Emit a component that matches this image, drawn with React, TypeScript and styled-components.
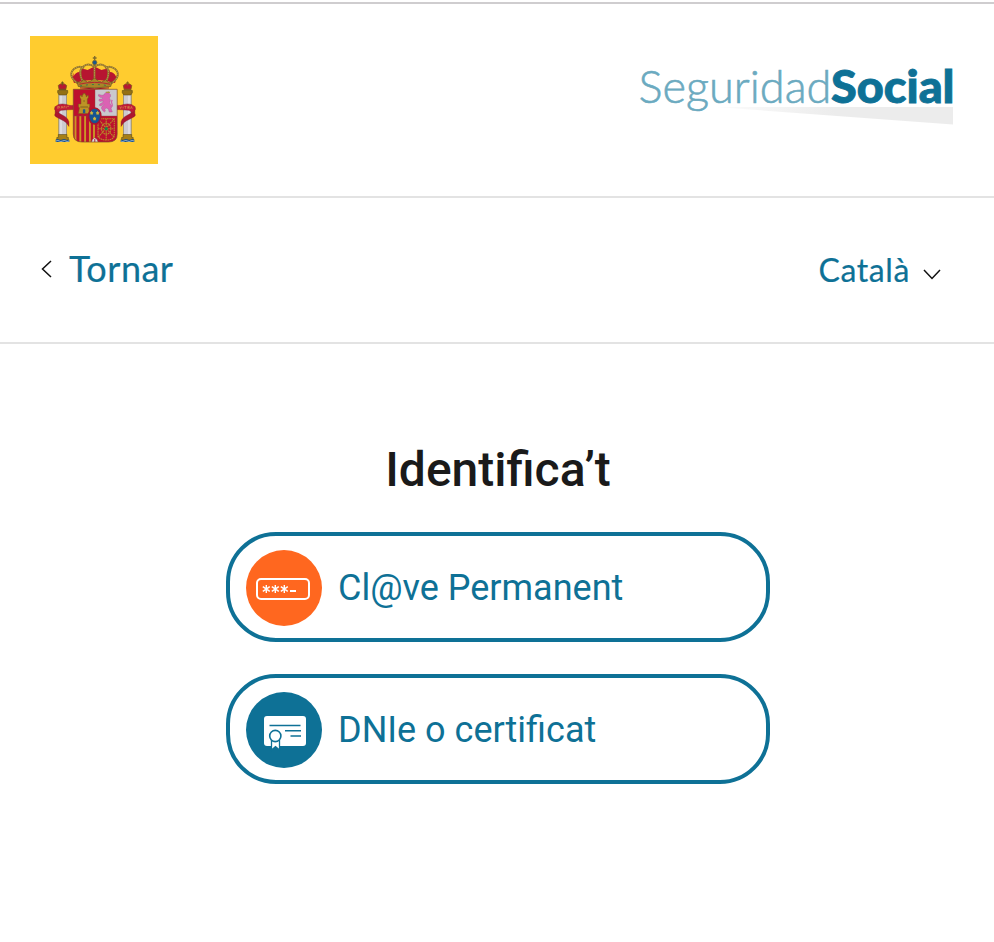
import React from 'react';
import styled, { createGlobalStyle } from 'styled-components';

const blue = '#0e7196';

const GlobalStyle = createGlobalStyle`
  * {
    box-sizing: border-box;
  }

  body {
    margin: 0;
    background: #fff;
    font-family: Roboto, sans-serif;
  }
`;

const Page = styled.div`
  min-height: 942px;
  padding-top: 2px;
`;

const Header = styled.header`
  display: flex;
  justify-content: space-between;
  align-items: flex-start;
  height: 196px;
  padding: 32px 30px 0;
  border-top: 2px solid #cfcdcf;
  border-bottom: 2px solid #e3e3e3;
`;

const Emblem = styled.svg`
  width: 128px;
  height: 128px;
  background: #ffcc2f;
`;

const Logo = styled.svg`
  width: 330px;
  height: 80px;
  margin-top: 14px;
  font-family: Lato, sans-serif;
`;

const NavBar = styled.nav`
  display: flex;
  justify-content: space-between;
  align-items: center;
  height: 146px;
  padding: 0 53px 0 41px;
  border-bottom: 2px solid #e3e3e3;
`;

const NavLink = styled.a<{ $size: number; $gap: number; $spacing: number }>`
  display: flex;
  align-items: center;
  gap: ${props => props.$gap}px;
  color: ${blue};
  font-family: Lato, sans-serif;
  font-size: ${props => props.$size}px;
  font-weight: 400;
  letter-spacing: ${props => props.$spacing}px;
  line-height: 48px;
  -webkit-text-stroke: 0.2px ${blue};
  cursor: pointer;
`;

const BackLabel = styled.span`
  margin-top: -4px;
`;

const Chevron = styled.svg<{ $down?: boolean }>`
  width: ${props => props.$down ? 18 : 11}px;
  height: ${props => props.$down ? 11 : 18}px;
  margin-top: ${props => props.$down ? 8 : -2}px;
  fill: none;
  stroke: #111;
  stroke-width: 1.5;
`;

const Main = styled.main`
  display: flex;
  flex-direction: column;
  align-items: center;
  padding: 96px 0 0 2px;
`;

const Title = styled.h1`
  margin: 0 0 32px;
  color: #1a1a1a;
  font-size: 48px;
  font-weight: 500;
  line-height: 60px;
`;

const Options = styled.div`
  display: flex;
  flex-direction: column;
  gap: 32px;
`;

const OptionButton = styled.button`
  display: flex;
  align-items: center;
  gap: 16px;
  width: 544px;
  height: 110px;
  padding: 2px 16px 0;
  border: 4px solid ${blue};
  border-radius: 50px;
  background: #fff;
  color: ${blue};
  font-family: Roboto, sans-serif;
  font-size: 36px;
  text-align: left;
  cursor: pointer;
`;

const OptionIcon = styled.svg`
  flex: none;
  width: 76px;
  height: 76px;
`;

// Column with its small crown, drawn for the left side of the shield
const Pillar = ({ imperial }: { imperial?: boolean }): JSX.Element => (
  <g>
    <rect x="28.8" y="57" width="7.8" height="44" fill="#cccbd0" stroke="#77736f" strokeWidth=".6" />
    <path d="M31 59v40" stroke="#e3e2e5" strokeWidth="1.4" />
    <path d="M27.7 54.5h10v2.2l-1.5 2.3h-7l-1.5-2.3z" fill="#947014" stroke="#5e4c18" strokeWidth=".6" />
    <path d="M28.3 98.5h8.6v3h1.5v2.5H26.8v-2.5h1.5z" fill="#a67f17" stroke="#5e4c18" strokeWidth=".6" />
    <path d="M25.7 103.5q2-1 3.3 0t3.3 0 3.3 0 3.7 0v2.5H25.7z" fill="#17518c" />
    <path d="M26 105q2-1 3.3 0t3.3 0 3.3 0 3.1 0" fill="none" stroke="#d5dae0" strokeWidth=".7" />
    <path d="M28.2 49.5q4.2-4 8.5 0l-1 4.5h-6.5z" fill="#b81832" stroke="#82601a" strokeWidth=".8" />
    <path d="M29 53.2h7M32.4 45.5v4M31.2 46.8h2.5" stroke={imperial ? '#876516' : '#6c581f'} strokeWidth="1.1" />
  </g>
);

const Ribbon = (): JSX.Element => (
  <g stroke="#7a1627" strokeWidth=".4">
    <path d="M25.2 70.5q-1.2 3 1 5l9 5.2q3 2 3.7 5v4.7q-2.2-4.2-5-5.4l-7.7-4q-2.4-1.4-1-3.8z" fill="#ad1630" />
    <path d="M43.4 69.3q-3.4.8-7-.8-6.8-1.7-10.9 1.9-1.6 3 .7 5.1l2.3 1.5q.3-2.5 3-2.7 6.2-.6 11.9-.8z" fill="#c21a36" />
  </g>
);

const CoatOfArms = (): JSX.Element => (
  <Emblem viewBox="0 0 128 128" role="img" aria-label="Escut d'Espanya">
    <defs>
      <clipPath id="shield">
        <path d="M43.3 53.3h43.9V98q0 8-8.5 8H51.8q-8.5 0-8.5-8z" />
      </clipPath>
    </defs>
    <Pillar />
    <g transform="translate(130 0) scale(-1 1)">
      <Pillar imperial />
      <Ribbon />
    </g>
    <Ribbon />
    <g fill="none" stroke="#d99b4c" strokeWidth=".6">
      <path d="M27.7 72.7v-2.2h1.7v1.4h-1.5m3.2.7.8-2.5 1 2.2m1.1 0v-2h1.2m1 2v-2m1 0h1.8" />
      <path d="m89.8 70.5.8 2 .9-2m1.6 0v2m1.3-2h2m-1 0v2.2m2.4 0v-2.3h1.5v1.2h-1.4l1.8 1.2m.9 0 .8-2.3.9 2.3" />
    </g>

    <g clipPath="url(#shield)">
      <path d="M43 53h22v27H43z" fill="#bd102e" />
      <path d="M65 53h22.5v27H65z" fill="#cac8ce" />
      <path d="M43 80h22v27H43z" fill="#bd102e" />
      <path d="M45.5 80v26M50.3 80v26M55.1 80v26M59.9 80v26M64 80v26" stroke="#c99726" strokeWidth="1.9" />
      <path d="M65 80h22.5v27H65z" fill="#bd102e" />
      <g fill="none" stroke="#b98b29" strokeWidth="1.1" strokeDasharray="1.7 .55">
        <path d="M68 82.7h16.3v17.8q-2 3.5-8 3.5t-8.3-3.5zM68 92.7h16.3M76.2 82.7V104M68 82.7l16.3 18.8M84.3 82.7 68 101.5" />
        <ellipse cx="76.2" cy="92.7" rx="4.7" ry="5.5" />
      </g>
      <circle cx="76.2" cy="92.7" r="1.6" fill="#148345" />
      <path d="m61 107 1.5-3.7 2.2-1.6 2.3 1.6 1.5 3.7z" fill="#dedbd9" stroke="#874a3b" strokeWidth=".5" />
      <path d="M64.8 103v3" stroke="#b51c3b" strokeWidth="1" />
    </g>
    <path d="M43.3 53.3h43.9V98q0 8-8.5 8H51.8q-8.5 0-8.5-8z" fill="none" stroke="#7d4c2c" strokeWidth=".7" />
    <path d="M65 53.5V80M43.5 80h43.5" stroke="#805343" strokeWidth=".4" />

    {/* castle */}
    <path
      d="M50 59.5v2.3l1 1.2v5h-2.5v3l1 .7-1 5.8h11.2l-1-5.8 1-.7v-3h-2.4v-5l1-1.2v-2.3h-1.4v1h-.9v-1.8h-.8v-1.2h-2v1.2h-.8v1.8h-.9v-1z"
      fill="#bd9325"
      stroke="#785c1d"
      strokeWidth=".5"
    />
    <path d="M52.9 77.2v-3.4q1.2-1.5 2.4 0v3.4z" fill="#235b8a" />
    <path d="M53.3 65h1.6M50.3 71h7.7" stroke="#795c1c" strokeWidth=".9" />

    {/* lion */}
    <path
      d="m74.2 58 1.6-1.3 3 .3 1.8 1.8-.1 1.8-1.1 1.3 1 2.3-.8 2.7 2.5 3.2-1 2.4 1.2 3.4-3.1.2-.8-3.2-2.2-.8-1.5 1.2.7 1.8-1 .8-1.8-1.5-1.3-2.5.8-1.8 1.9-1.3-.2-.7-3 1.8-1.4-.4.4-1.5 3-1.8.2-1.5-2.8.9-1.4-1.2.6-1.3 2.4-.2 1.2-1.1-2.4-.2-2.2-1.5.2-1.6 3.2.7 1.8-.1z"
      fill="#db62b3"
      stroke="#a35a91"
      strokeWidth=".4"
    />
    <path d="M79.8 71q3.4-.2 2.3-3-1.4-2.3.2-4" fill="none" stroke="#d363ac" strokeWidth="1.2" />
    <path d="m75.8 56.8.1-1.4 1.3.6.9-.9.9.9 1.2-.5-.5 1.6z" fill="#af8939" />

    <ellipse cx="64.7" cy="80" rx="6.1" ry="8" fill="#165492" stroke="#ab142d" strokeWidth="1.6" />
    <g fill="#d1b53c">
      <path id="lis" d="m61.6 74.8.8 1.4 1-.1-.6 1.5.1 1h-2.6l.1-1-.6-1.5 1 .1z" />
      <use href="#lis" x="6" />
      <use href="#lis" x="3" y="5.6" />
    </g>

    {/* royal crown */}
    <path d="M44 47q-4-8.5 2.5-12.5 6-2.6 11-.5l7-3.5 7 3.5q6-2 11 .5 6.5 4 2.5 12.5-20-6-41 0z" fill="#b71531" />
    <path d="M43.5 35.5q2-3 7-2.5l-1 3q-4 0-6 4.5zM86 35.5q-2-3-7-2.5l1 3q4 0 6 4.5z" fill="#ffcc2f" />
    <g fill="none" stroke="#94752a" strokeWidth="1.9">
      <path d="M47.8 47.5q-10.7-8-4-14.4 5.8-4.2 10.2-.8" />
      <path d="M81.3 47.5q10.7-8 4-14.4-5.8-4.2-10.2-.8" />
      <path d="M53 46q-5.8-11.7.6-15.8 5.4-3.6 10.8.8 5.4-4.4 10.8-.8 6.4 4.1.6 15.8" />
      <path d="M64.5 28v18" />
    </g>
    <g fill="none" stroke="#cdb56c" strokeWidth=".7" strokeDasharray="1 1.2">
      <path d="M47.8 47.5q-10.7-8-4-14.4 5.8-4.2 10.2-.8M81.3 47.5q10.7-8 4-14.4-5.8-4.2-10.2-.8" />
      <path d="M53 46q-5.8-11.7.6-15.8 5.4-3.6 10.8.8 5.4-4.4 10.8-.8 6.4 4.1.6 15.8M64.5 32v13" />
    </g>
    <circle cx="64.7" cy="26.5" r="2.2" fill="#1c568c" stroke="#806b2d" strokeWidth=".7" />
    <path d="M64.7 20v4.5M62.8 22h3.8" stroke="#806b2d" strokeWidth="1.3" />
    <path
      d="m48.3 50.5-1.3-4.7 3.7.7 2.9-3 3.7 2.5 3.4-1 3.9-3 3.8 3 3.5 1 3.7-2.5 2.7 3 3.7-.7-1.3 4.7q-16 3-32.4 0z"
      fill="#a98528"
      stroke="#695323"
      strokeWidth=".7"
    />
    <path d="M49.4 48.2q15-3.6 30.6 0" fill="none" stroke="#b51a33" strokeWidth=".9" />
    <path d="M50 50q14.5-3 29.6 0" fill="none" stroke="#267c50" strokeWidth=".9" strokeDasharray="2 4" />
    <path d="M50 51.9q15 2 29 0" stroke="#98152b" strokeWidth="1" fill="none" />
  </Emblem>
);

const SeguridadSocialLogo = (): JSX.Element => (
  <Logo viewBox="634 50 330 80" role="img">
    <defs>
      <linearGradient id="wedge">
        <stop offset="0" stopColor="#fcfcfc" />
        <stop offset=".5" stopColor="#ececec" />
      </linearGradient>
    </defs>
    <path d="M716 107h237v17.5z" fill="url(#wedge)" />
    <text
      x="638.5"
      y="103"
      fontSize="45.5"
      fontWeight="300"
      textLength="193"
      lengthAdjust="spacingAndGlyphs"
      fill="#6baac0"
      stroke="#6baac0"
      strokeWidth=".6"
    >
      Seguridad
    </text>
    <text
      x="831"
      y="103"
      fontSize="45.5"
      fontWeight="900"
      textLength="123.5"
      lengthAdjust="spacingAndGlyphs"
      fill={blue}
      stroke={blue}
      strokeWidth=".9"
    >
      Social
    </text>
  </Logo>
);

const PasswordIcon = (): JSX.Element => (
  <OptionIcon viewBox="0 0 76 76">
    <circle cx="38" cy="38" r="38" fill="#ff671f" />
    <rect x="11" y="29" width="52" height="20" rx="4" fill="none" stroke="#fff" strokeWidth="2" />
    {[20.3, 29.3, 38.3].map(x => (
      <path
        key={x}
        transform={`translate(${x} 39)`}
        d="M0-4V4M-3.5-2.4 3.5 2.4M3.5-2.4-3.5 2.4"
        stroke="#fff"
        strokeWidth="1.4"
      />
    ))}
    <path d="M44 41h6" stroke="#fff" strokeWidth="2" />
  </OptionIcon>
);

const CertificateIcon = (): JSX.Element => (
  <OptionIcon viewBox="0 0 76 76">
    <circle cx="38" cy="38" r="38" fill={blue} />
    <rect x="18" y="24" width="42" height="30" rx="3" fill="#fff" />
    <path d="M23.5 33.5h31M39 38.7h16M44.5 44h10.5" stroke={blue} strokeWidth="1.5" />
    <path d="M25.5 48h8v10l-4-3.3-4 3.3z" fill="#fff" stroke={blue} strokeWidth="1.3" />
    <circle cx="29.3" cy="44" r="5.6" fill="#fff" stroke={blue} strokeWidth="1.6" />
  </OptionIcon>
);

const App = (): JSX.Element => {
  return <>
    <GlobalStyle />
    <Page>
      <Header>
        <CoatOfArms />
        <SeguridadSocialLogo />
      </Header>
      <NavBar>
        <NavLink $size={36} $gap={17} $spacing={0.5}>
          <Chevron viewBox="0 0 11 18"><path d="M10 1 1.5 9l8.5 8" /></Chevron>
          <BackLabel>Tornar</BackLabel>
        </NavLink>
        <NavLink $size={32} $gap={13} $spacing={0.6}>
          Català
          <Chevron $down viewBox="0 0 18 11"><path d="m1 1 8 8.5L17 1" /></Chevron>
        </NavLink>
      </NavBar>
      <Main>
        <Title>Identifica’t</Title>
        <Options>
          <OptionButton>
            <PasswordIcon />
            Cl@ve Permanent
          </OptionButton>
          <OptionButton>
            <CertificateIcon />
            DNIe o certificat
          </OptionButton>
        </Options>
      </Main>
    </Page>
  </>;
};

export default App;
